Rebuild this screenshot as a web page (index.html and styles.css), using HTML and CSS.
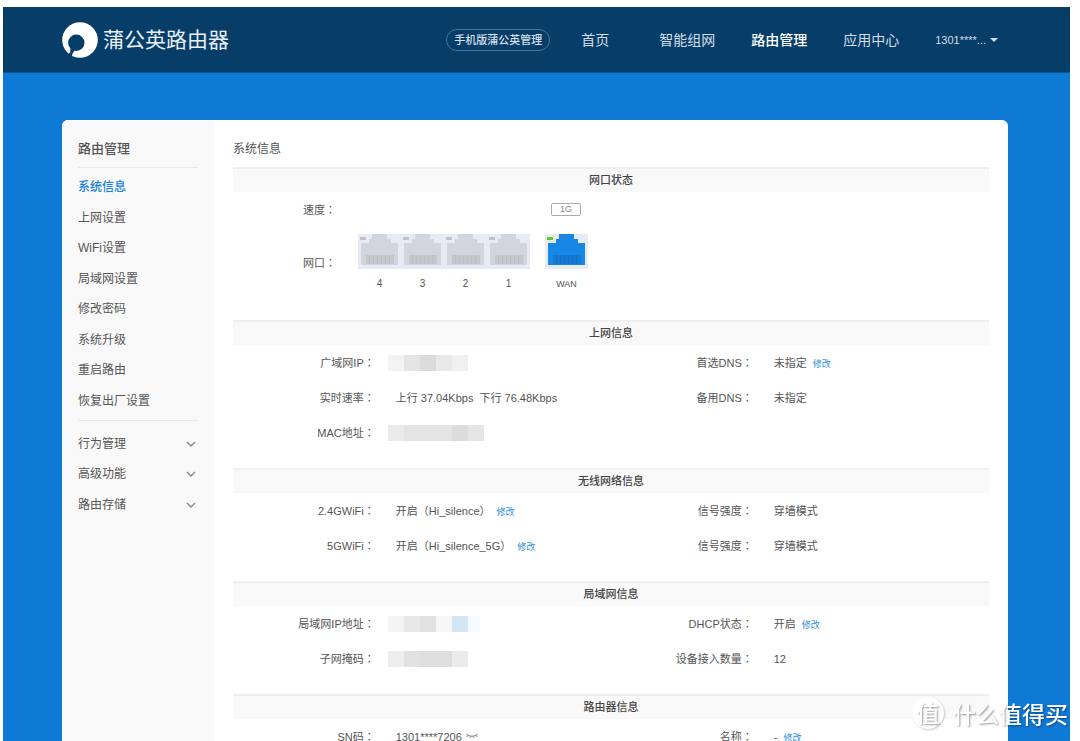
FILE: index.html
```html
<!DOCTYPE html>
<html lang="zh-CN">
<head>
<meta charset="utf-8">
<meta name="viewport" content="width=device-width, initial-scale=1">
<title>蒲公英路由器</title>
<link rel="stylesheet" href="styles.css">
</head>
<body>
<svg class="defs" aria-hidden="true">
  <symbol id="port" viewBox="0 0 43 35">
    <rect class="port-frame" width="43" height="35"/>
    <path class="port-jack" d="M3 31V9h8V5h3V0h15v5h4v4h7v22z"/>
    <path class="port-pins" d="M8 21h28v9H8z"/>
    <path class="port-lines" d="M11.500 21v9M15.500 21v9M19.500 21v9M23.500 21v9M27.500 21v9M31.500 21v9"/>
    <rect class="port-led" x="2" y="3" width="6" height="3"/>
  </symbol>
  <symbol id="chevron" viewBox="0 0 10 6">
    <path d="M1 1l4 4 4-4" fill="none" stroke="currentColor" stroke-width="1.400"/>
  </symbol>
</svg>
<div class="app">
  <header class="topbar">
    <a class="brand" href="#">
      <svg class="brand-mark" viewBox="0 0 36 36" aria-hidden="true">
        <circle cx="18" cy="18" r="17.800" fill="#fff"/>
        <circle cx="14.300" cy="20.800" r="8.200" fill="#063d69"/>
        <path d="M7 24l6 4-2.500 3.500L9.500 36 6 33l1.800-3z" fill="#063d69"/>
        <path d="M2 25l5-1 1.500 3L8 31.500z" fill="#fff"/>
      </svg>
      <span>蒲公英路由器</span>
    </a>
    <nav class="topnav">
      <a class="pill" href="#">手机版蒲公英管理</a>
      <ul class="menu">
        <li><a href="#">首页</a></li>
        <li><a href="#">智能组网</a></li>
        <li><a class="current" href="#">路由管理</a></li>
        <li><a href="#">应用中心</a></li>
        <li><button class="user" type="button">1301****... <span class="caret"></span></button></li>
      </ul>
    </nav>
  </header>
  <div class="card">
    <aside class="sidebar">
      <h2>路由管理</h2>
      <ul class="side-list">
        <li><a class="current" href="#">系统信息</a></li>
        <li><a href="#">上网设置</a></li>
        <li><a href="#">WiFi设置</a></li>
        <li><a href="#">局域网设置</a></li>
        <li><a href="#">修改密码</a></li>
        <li><a href="#">系统升级</a></li>
        <li><a href="#">重启路由</a></li>
        <li><a href="#">恢复出厂设置</a></li>
      </ul>
      <ul class="side-list groups">
        <li><button type="button">行为管理<svg><use href="#chevron"/></svg></button></li>
        <li><button type="button">高级功能<svg><use href="#chevron"/></svg></button></li>
        <li><button type="button">路由存储<svg><use href="#chevron"/></svg></button></li>
      </ul>
    </aside>
    <main class="content">
      <h1>系统信息</h1>
      <section class="block">
        <h3>网口状态</h3>
        <div class="port-row">
          <span class="port-label">速度<i lang="zh-TW">：</i></span>
          <div class="ports speeds"><span class="speed">1G</span></div>
        </div>
        <div class="port-row tall">
          <span class="port-label">网口<i lang="zh-TW">：</i></span>
          <div class="ports">
            <figure><svg><use href="#port"/></svg><figcaption>4</figcaption></figure>
            <figure><svg><use href="#port"/></svg><figcaption>3</figcaption></figure>
            <figure><svg><use href="#port"/></svg><figcaption>2</figcaption></figure>
            <figure><svg><use href="#port"/></svg><figcaption>1</figcaption></figure>
            <figure class="wan"><svg><use href="#port"/></svg><figcaption>WAN</figcaption></figure>
          </div>
        </div>
      </section>
      <section class="block">
        <h3>上网信息</h3>
        <div class="halves">
          <dl>
            <dt>广域网IP<i lang="zh-TW">：</i></dt><dd><span class="mosaic wan-ip"></span></dd>
            <dt>实时速率<i lang="zh-TW">：</i></dt><dd>上行 37.04Kbps&nbsp; 下行 76.48Kbps</dd>
            <dt>MAC地址<i lang="zh-TW">：</i></dt><dd><span class="mosaic mac"></span></dd>
          </dl>
          <dl>
            <dt>首选DNS<i lang="zh-TW">：</i></dt><dd>未指定<a href="#">修改</a></dd>
            <dt>备用DNS<i lang="zh-TW">：</i></dt><dd>未指定</dd>
          </dl>
        </div>
      </section>
      <section class="block">
        <h3>无线网络信息</h3>
        <div class="halves">
          <dl>
            <dt>2.4GWiFi<i lang="zh-TW">：</i></dt><dd>开启（Hi_silence）<a href="#">修改</a></dd>
            <dt>5GWiFi<i lang="zh-TW">：</i></dt><dd>开启（Hi_silence_5G）<a href="#">修改</a></dd>
          </dl>
          <dl>
            <dt>信号强度<i lang="zh-TW">：</i></dt><dd>穿墙模式</dd>
            <dt>信号强度<i lang="zh-TW">：</i></dt><dd>穿墙模式</dd>
          </dl>
        </div>
      </section>
      <section class="block">
        <h3>局域网信息</h3>
        <div class="halves">
          <dl>
            <dt>局域网IP地址<i lang="zh-TW">：</i></dt><dd><span class="mosaic lan-ip"></span></dd>
            <dt>子网掩码<i lang="zh-TW">：</i></dt><dd><span class="mosaic mask"></span></dd>
          </dl>
          <dl>
            <dt>DHCP状态<i lang="zh-TW">：</i></dt><dd>开启<a href="#">修改</a></dd>
            <dt>设备接入数量<i lang="zh-TW">：</i></dt><dd>12</dd>
          </dl>
        </div>
      </section>
      <section class="block">
        <h3>路由器信息</h3>
        <div class="halves">
          <dl>
            <dt>SN码<i lang="zh-TW">：</i></dt>
            <dd>1301****7206<svg class="eye" viewBox="0 0 12 6" aria-hidden="true"><path d="M.5 1Q6 5.500 11.500 1M2 2L1 4M4.500 3.200L4 5M7.500 3.200L8 5M10 2l1 2" fill="none" stroke="#777" stroke-width=".9"/></svg></dd>
          </dl>
          <dl>
            <dt>名称<i lang="zh-TW">：</i></dt><dd>-<a href="#">修改</a></dd>
          </dl>
        </div>
      </section>
    </main>
  </div>
</div>
<div class="watermark"><span class="seal">值</span><span>什么值得买</span></div>
</body>
</html>
```

FILE: styles.css
```css
* { box-sizing: border-box; margin: 0; padding: 0; }
html { scrollbar-width: none; background: #fff; }
body {
  padding: 7px 10px 0 3px;
  font: 11px/16px "Liberation Sans", "Noto Sans CJK SC", sans-serif;
  color: #555;
}
ul { list-style: none; }
a { color: inherit; text-decoration: none; }
button { font: inherit; color: inherit; background: none; border: 0; cursor: pointer; }
i { font-family: "Noto Sans CJK TC", sans-serif; font-style: normal; line-height: 1; }
.defs { position: absolute; width: 0; height: 0; }

.app { background: #0f7ad6; min-height: calc(100vh - 7px); }

.topbar {
  display: flex;
  justify-content: space-between;
  align-items: center;
  height: 66px;
  padding: 0 72px 0 59px;
  background: #063d69;
  border-bottom: 1px solid #07599a;
}
.brand { display: flex; align-items: center; gap: 5px; font-size: 21px; line-height: 32px; color: #e9eff4; }
.brand-mark { width: 36px; height: 36px; }
.topnav { display: flex; align-items: center; gap: 17px; color: #d5dfe8; }
.pill {
  padding: 0 7px;
  line-height: 20px;
  border: 1px solid #4b7393;
  border-radius: 11px;
  font-weight: 500;
  white-space: nowrap;
}
.menu { display: flex; align-items: center; gap: 36px; font-size: 14px; line-height: 20px; }
.menu li { min-width: 56px; text-align: center; white-space: nowrap; }
.menu .current { color: #fff; font-weight: 500; }
.user { display: flex; align-items: center; gap: 4px; font-size: 11px; }
.caret { border: 4px solid transparent; border-top-color: currentColor; border-bottom: 0; }

.card {
  display: flex;
  margin: 47px 62px 0 59px;
  background: #fff;
  border-radius: 6px 6px 0 0;
  overflow: hidden;
}
.sidebar { flex: 0 0 152px; padding: 17px 16px; background: #f9f9f9; font-size: 12px; }
.sidebar h2 {
  height: 31px;
  font-size: 13px;
  line-height: 24px;
  font-weight: 500;
  border-bottom: 1px solid #e9e9e9;
}
.side-list { display: grid; grid-auto-rows: 1fr; align-items: center; height: 248px; padding-top: 4px; }
.side-list .current { color: #1681de; font-weight: 500; }
.groups { height: 100px; padding-top: 8px; margin-top: 4px; border-top: 1px solid #e9e9e9; }
.groups button { display: flex; justify-content: space-between; align-items: center; width: 100%; padding-right: 2px; }
.groups svg { width: 10px; height: 6px; color: #888; }

.content { flex: 1; padding: 17px 19px 0; }
.content h1 { height: 30px; font-size: 12px; line-height: 24px; font-weight: 400; }
.block { padding-bottom: 18px; }
.block h3 {
  height: 25px;
  font-size: 11px;
  line-height: 23px;
  font-weight: 500;
  color: #444;
  text-align: center;
  background: #f9f9f9;
  border-top: 2px solid #efefef;
}
.halves { display: grid; grid-template-columns: 1fr 1fr; align-items: start; }
dl { display: grid; grid-template-columns: 3fr 5fr; grid-auto-rows: 35px; align-items: center; }
dt { text-align: right; white-space: nowrap; }
dd { padding-left: 21px; white-space: nowrap; }
dd a { margin-left: 6px; font-size: 9px; line-height: 1; color: #2f8fd3; }

.mosaic { display: block; width: 80px; height: 16px; margin-left: -8px; }
.wan-ip { background: linear-gradient(90deg, #f3f3f3 16px, #e5e5e5 16px 32px, #dcdcdc 32px 48px, #e9e9e9 48px 64px, #f0f0f0 64px); }
.mac { width: 96px; background: linear-gradient(90deg, #eaeaea 16px, #e4e4e4 16px 64px, #dcdcdc 64px 80px, #e6e6e6 80px); }
.lan-ip { width: 92px; background: linear-gradient(90deg, #f3f3f3 16px, #e7e7e7 16px 32px, #e0e2e1 32px 48px, #f6f7f7 48px 64px, #d2e6f3 64px 80px, #f5fafd 80px); }
.mask { background: linear-gradient(90deg, #ededed 16px, #e1e1e1 16px 32px, #dedede 32px 64px, #ebebeb 64px); }
.eye { width: 12px; height: 6px; margin-left: 4px; vertical-align: 2px; }

.port-row { display: flex; align-items: center; gap: 22px; height: 35px; }
.port-row.tall { height: 71px; margin-bottom: 4px; }
.port-label { flex: 0 0 103px; text-align: right; }
.ports { display: flex; width: 230px; }
.ports figure { width: 43px; text-align: center; }
.ports svg { display: block; width: 43px; height: 35px; }
.ports figcaption { padding-top: 7px; font-size: 10px; }
.ports .wan { margin-left: 15px; }
.wan figcaption { font-size: 9px; }
.speeds { justify-content: flex-end; padding-right: 7px; }
.speed {
  width: 30px;
  border: 1px solid #aaa;
  border-radius: 2px;
  font-size: 9px;
  line-height: 11px;
  color: #888;
  text-align: center;
}
.port-frame { fill: #e8ebf3; }
.wan { --jack: #1787e5; --pins: #147ad6; --lines: #126dc6; --led: #65c624; }
.port-jack { fill: var(--jack, #d1d5dd); }
.port-pins { fill: var(--pins, #c5c7cb); }
.port-lines { fill: none; stroke: var(--lines, #bcbec3); }
.port-led { fill: var(--led, #bfc1c4); }

.watermark {
  position: fixed;
  right: 12px;
  bottom: 12px;
  display: flex;
  align-items: center;
  gap: 9px;
  font: 500 23px/30px "Noto Sans CJK SC", sans-serif;
  color: #fff;
  text-shadow: 1px 1px 2px rgba(0, 0, 0, .4);
}
.seal {
  width: 32px;
  height: 32px;
  border-radius: 50%;
  background: #fff;
  box-shadow: 1px 1px 2px rgba(0, 0, 0, .2);
  color: #fff;
  text-align: center;
}
```
